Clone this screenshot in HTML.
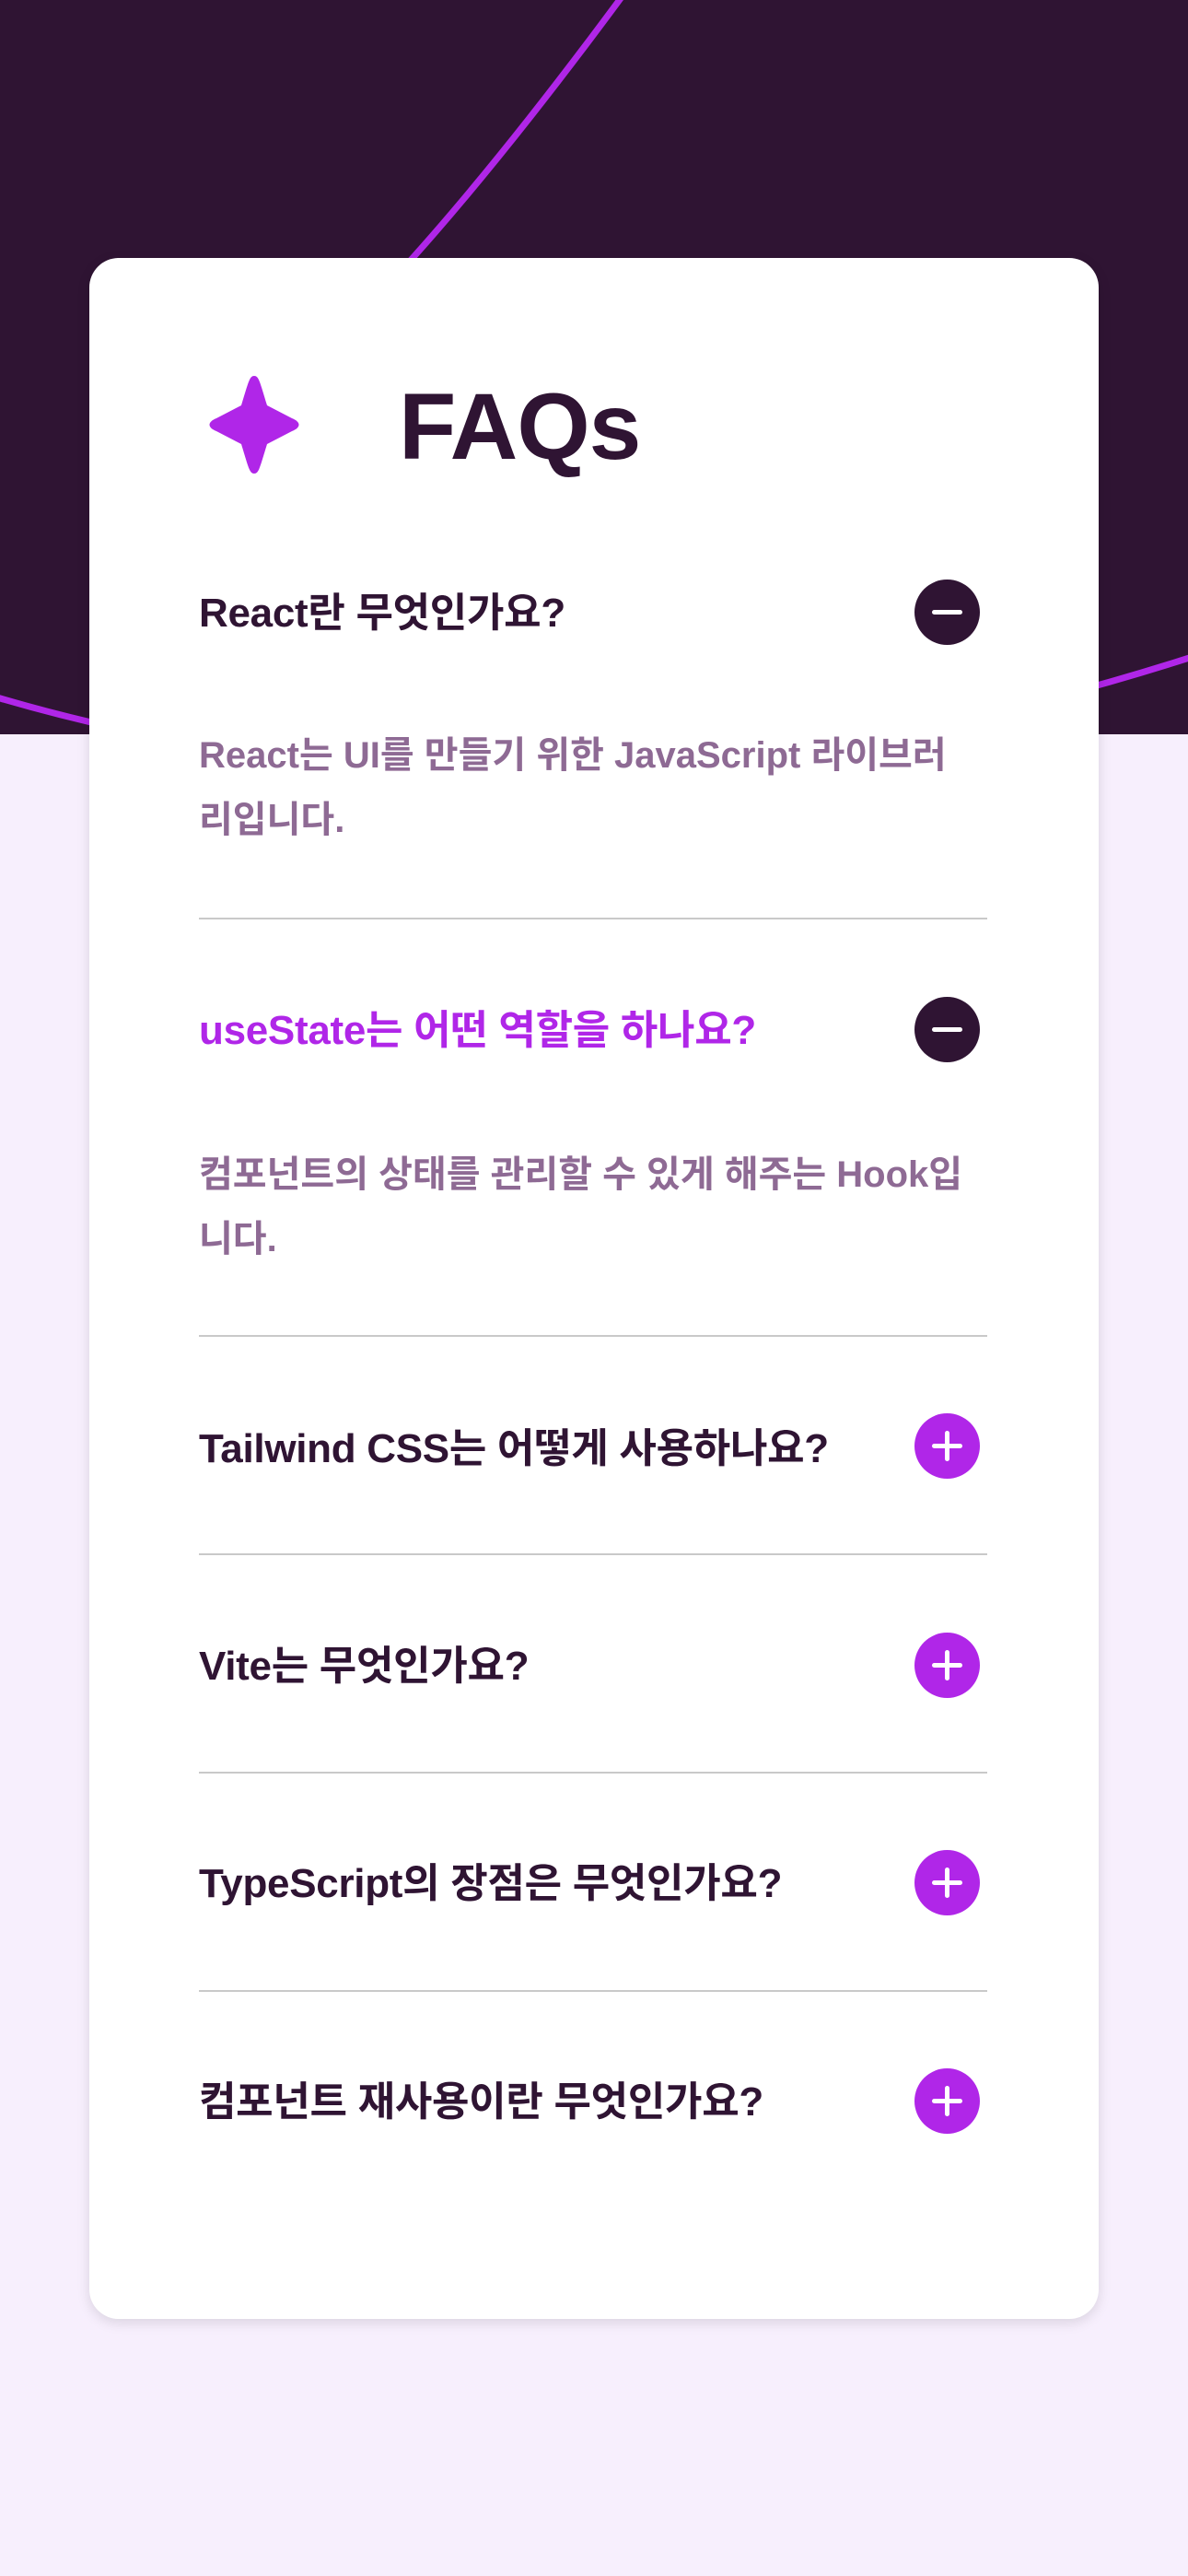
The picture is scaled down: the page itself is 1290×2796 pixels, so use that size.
<!DOCTYPE html>
<html><head><meta charset="utf-8"><style>
*{margin:0;padding:0;box-sizing:border-box}
body{width:1290px;height:2796px;background:#f7effd;position:relative;overflow:hidden;font-family:"Liberation Sans","Noto Sans CJK KR",sans-serif}
.top{position:absolute;left:0;top:0;width:1290px;height:797px;background:#2f1433}
svg.bg{position:absolute;left:0;top:0}
.card{position:absolute;left:97px;top:280px;width:1096px;height:2237px;background:#fff;border-radius:32px;box-shadow:0 4px 14px rgba(0,0,0,.12)}
.title{position:absolute;left:336px;top:132px;font-size:102px;font-weight:bold;color:#2f1433;letter-spacing:-1px;line-height:1}
.star{position:absolute;left:124px;top:126px}
.q{position:absolute;left:119px;font-size:44px;font-weight:bold;color:#2f1433;letter-spacing:-0.3px;line-height:1}
.a{position:absolute;left:119px;font-size:40px;font-weight:bold;color:#8e6a94;line-height:70px;width:840px}
.line{position:absolute;left:119px;width:856px;height:2px;background:#c9c9c9}
.ic{position:absolute;left:896px;width:71px;height:71px;border-radius:50%}
.ic.m{background:#2f1433}.ic.p{background:#b026e8}
.ic:before{content:"";position:absolute;left:19px;top:33px;width:33px;height:5px;background:#fff;border-radius:3px}
.ic.p:after{content:"";position:absolute;left:33px;top:19px;width:5px;height:33px;background:#fff;border-radius:3px}
</style></head><body>
<div class="top"></div>
<svg class="bg" width="1290" height="800"><path d="M680 -10 Q 540 180 430 300" stroke="#b026e8" stroke-width="7" fill="none"/><path d="M-20 752 Q 600 940 1310 708" stroke="#b026e8" stroke-width="7" fill="none"/></svg>
<div class="card">
<svg class="star" width="110" height="110" viewBox="0 0 110 110"><path d="M55 2 C60 2 61 8 69 34 L96 48 C106 52 106 58 96 62 L69 76 C61 102 60 108 55 108 C50 108 49 102 41 76 L14 62 C4 58 4 52 14 48 L41 34 C49 8 50 2 55 2Z" fill="#b026e8"/></svg>
<div class="title">FAQs</div>
<div class="q" style="top:364px">React란 무엇인가요?</div>
<div class="ic m" style="top:349px"></div>
<div class="a" style="top:505px">React는 UI를 만들기 위한 JavaScript 라이브러리입니다.</div>
<div class="line" style="top:716px"></div>
<div class="q" style="top:817px;color:#b026e8">useState는 어떤 역할을 하나요?</div>
<div class="ic m" style="top:802px"></div>
<div class="a" style="top:960px">컴포넌트의 상태를 관리할 수 있게 해주는 Hook입니다.</div>
<div class="line" style="top:1169px"></div>
<div class="q" style="top:1271px">Tailwind CSS는 어떻게 사용하나요?</div>
<div class="ic p" style="top:1254px"></div>
<div class="line" style="top:1406px"></div>
<div class="q" style="top:1507px">Vite는 무엇인가요?</div>
<div class="ic p" style="top:1492px"></div>
<div class="line" style="top:1643px"></div>
<div class="q" style="top:1743px">TypeScript의 장점은 무엇인가요?</div>
<div class="ic p" style="top:1728px"></div>
<div class="line" style="top:1880px"></div>
<div class="q" style="top:1980px">컴포넌트 재사용이란 무엇인가요?</div>
<div class="ic p" style="top:1965px"></div>
</div>
</body></html>
